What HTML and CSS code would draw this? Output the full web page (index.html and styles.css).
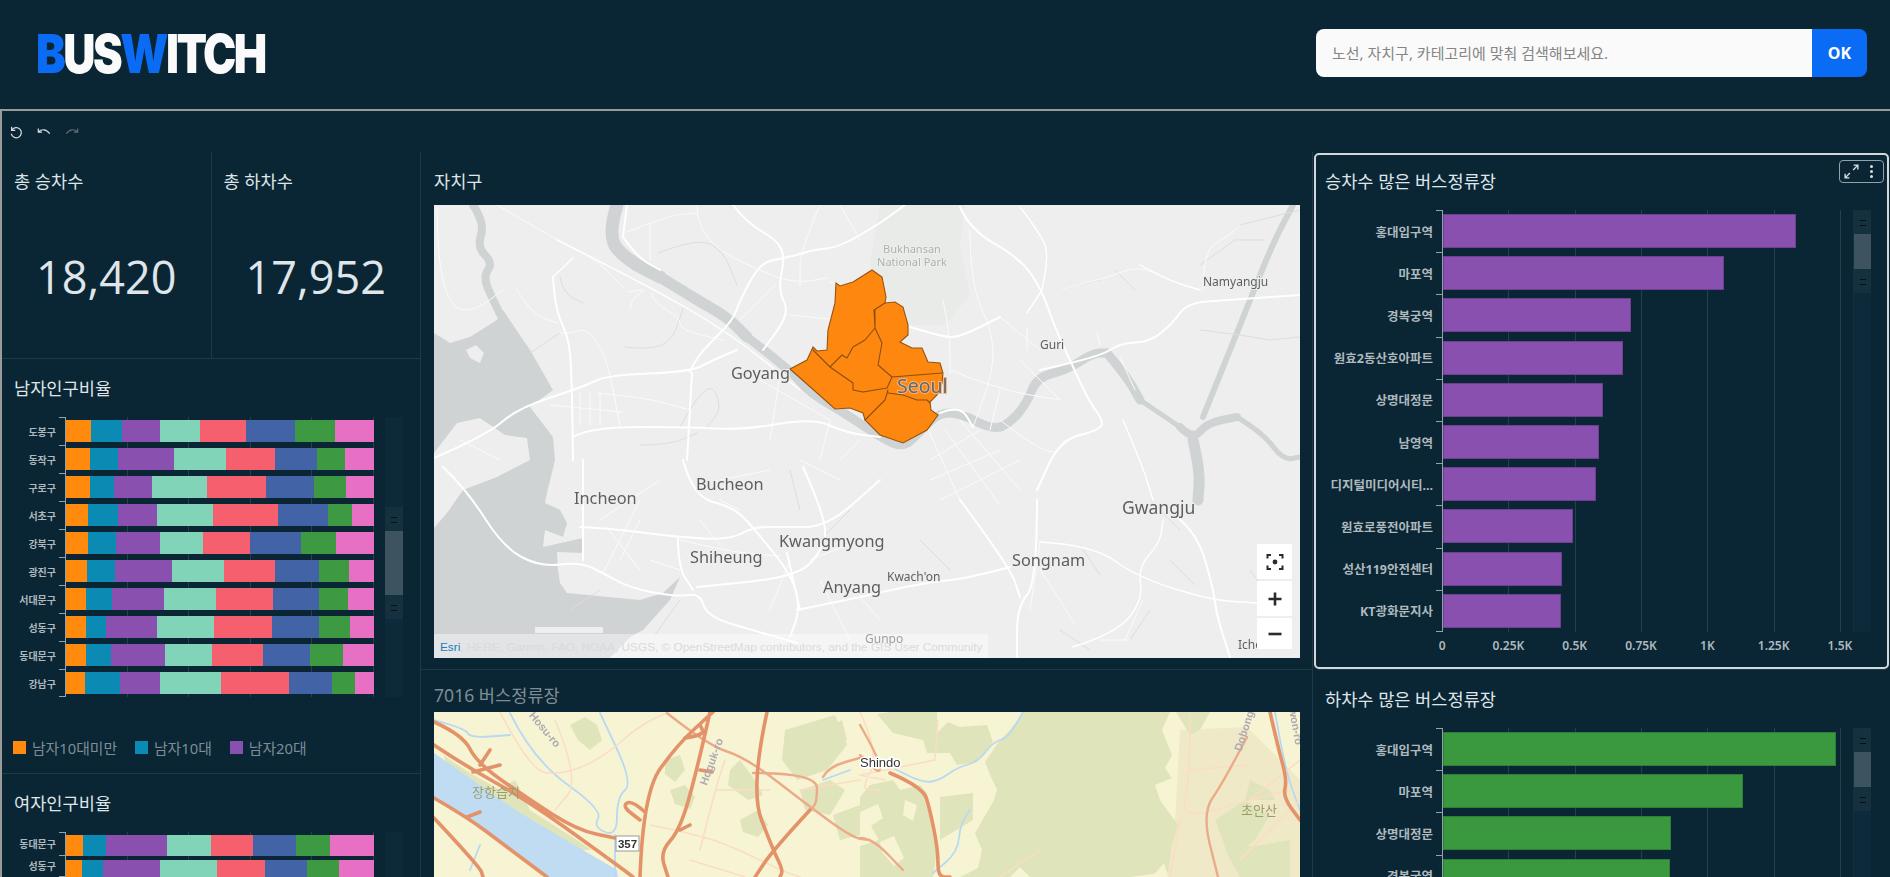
FILE: index.html
```html
<!DOCTYPE html>
<html lang="ko">
<head>
  <meta charset="UTF-8">
  <title>BUSWITCH</title>
  <link rel="stylesheet" href="styles.css">
</head>
<body>
  <header class="topbar">
    <div class="logo"><b class="blue">B</b>US<b class="blue">W</b>ITCH</div>
    <form class="search">
      <input type="text" placeholder="노선, 자치구, 카테고리에 맞춰 검색해보세요.">
      <button type="button">OK</button>
    </form>
  </header>

  <main class="sheet">
    <div class="toolbar">
      <svg viewBox="0 0 16 16"><path d="M3 2v4.2h4.2M3.2 6A5.8 5.8 0 1 1 2.6 10"/></svg>
      <svg viewBox="0 0 16 16"><path d="M1.5 4v4.2h4.2M1.7 8C5 4.400 10.500 4.200 14.500 9.800"/></svg>
      <svg class="off" viewBox="0 0 16 16"><path d="M14.500 4v4.200h-4.200M14.300 8C11 4.400 5.500 4.200 1.500 9.800"/></svg>
    </div>

    <div class="grid">
      <!-- left column -->
      <section class="col col-left">
        <div class="kpis">
          <div class="kpi">
            <h3 class="title">총 승차수</h3>
            <div class="kpi-value">18,420</div>
          </div>
          <div class="kpi">
            <h3 class="title">총 하차수</h3>
            <div class="kpi-value">17,952</div>
          </div>
        </div>

        <div class="panel panel-men">
          <h3 class="title">남자인구비율</h3>
          <div class="chart stack">
            <div class="labels">
              <span>도봉구</span><span>동작구</span><span>구로구</span><span>서초구</span><span>강북구</span>
              <span>광진구</span><span>서대문구</span><span>성동구</span><span>동대문구</span><span>강남구</span>
            </div>
            <div class="plot">
              <div class="sbar"><i style="flex:74"></i><i style="flex:95"></i><i style="flex:114"></i><i style="flex:120"></i><i style="flex:138"></i><i style="flex:145"></i><i style="flex:120"></i><i style="flex:118"></i></div>
              <div class="sbar"><i style="flex:71"></i><i style="flex:84"></i><i style="flex:170"></i><i style="flex:156"></i><i style="flex:145"></i><i style="flex:127"></i><i style="flex:85"></i><i style="flex:86"></i></div>
              <div class="sbar"><i style="flex:71"></i><i style="flex:73"></i><i style="flex:114"></i><i style="flex:166"></i><i style="flex:177"></i><i style="flex:144"></i><i style="flex:96"></i><i style="flex:83"></i></div>
              <div class="sbar"><i style="flex:67"></i><i style="flex:88"></i><i style="flex:117"></i><i style="flex:170"></i><i style="flex:194"></i><i style="flex:149"></i><i style="flex:74"></i><i style="flex:65"></i></div>
              <div class="sbar"><i style="flex:67"></i><i style="flex:84"></i><i style="flex:132"></i><i style="flex:127"></i><i style="flex:142"></i><i style="flex:152"></i><i style="flex:106"></i><i style="flex:114"></i></div>
              <div class="sbar"><i style="flex:64"></i><i style="flex:84"></i><i style="flex:170"></i><i style="flex:156"></i><i style="flex:152"></i><i style="flex:134"></i><i style="flex:89"></i><i style="flex:75"></i></div>
              <div class="sbar"><i style="flex:60"></i><i style="flex:78"></i><i style="flex:155"></i><i style="flex:156"></i><i style="flex:173"></i><i style="flex:138"></i><i style="flex:85"></i><i style="flex:79"></i></div>
              <div class="sbar"><i style="flex:60"></i><i style="flex:60"></i><i style="flex:152"></i><i style="flex:173"></i><i style="flex:174"></i><i style="flex:141"></i><i style="flex:92"></i><i style="flex:72"></i></div>
              <div class="sbar"><i style="flex:60"></i><i style="flex:74"></i><i style="flex:163"></i><i style="flex:141"></i><i style="flex:153"></i><i style="flex:141"></i><i style="flex:99"></i><i style="flex:93"></i></div>
              <div class="sbar"><i style="flex:57"></i><i style="flex:105"></i><i style="flex:121"></i><i style="flex:183"></i><i style="flex:202"></i><i style="flex:131"></i><i style="flex:67"></i><i style="flex:58"></i></div>
            </div>
            <div class="scroller"><b></b><em></em><b></b></div>
          </div>
          <ul class="legend">
            <li><i class="c1"></i>남자10대미만</li>
            <li><i class="c2"></i>남자10대</li>
            <li><i class="c3"></i>남자20대</li>
          </ul>
        </div>

        <div class="panel panel-women">
          <h3 class="title">여자인구비율</h3>
          <div class="chart stack tight">
            <div class="labels">
              <span>동대문구</span><span>성동구</span>
            </div>
            <div class="plot">
              <div class="sbar"><i style="flex:52"></i><i style="flex:67"></i><i style="flex:184"></i><i style="flex:132"></i><i style="flex:127"></i><i style="flex:127"></i><i style="flex:103"></i><i style="flex:132"></i></div>
              <div class="sbar"><i style="flex:49"></i><i style="flex:63"></i><i style="flex:171"></i><i style="flex:170"></i><i style="flex:145"></i><i style="flex:126"></i><i style="flex:96"></i><i style="flex:104"></i></div>
            </div>
            <div class="scroller"></div>
          </div>
        </div>
      </section>

      <!-- maps -->
      <section class="col col-mid">
        <div class="panel panel-map">
          <h3 class="title">자치구</h3>
          <div class="map">
            <svg class="map-svg soft" viewBox="434 205 866 453">
              <rect x="434" y="205" width="866" height="453" fill="#eeeeee"/>
              <path fill="#e9ebe8" d="M880 205h85l-5 40 10 50-25 30h-45l-30-60z"/>
              <g class="water">
                <path d="M434 333 450 343 470 337 497 320 503 310 530 350 553 390 530 407 553 437 555 460 547 493 545 503 560 510 567 523 563 537 545 530 543 547 583 538 583 553 557 552 558 570 560 583 567 593 640 600 663 593 680 577 670 600 643 630 630 637 610 658H434z"/>
              </g>
              <path fill="#eeeeee" d="M434 453 457 423 480 418 505 435 527 438 530 460 497 477 463 490 447 513 434 528z"/>
              <path fill="#eeeeee" d="M466 350l10-5 8 8-4 10-10-5zM535 627h68v6h-68z"/>
              <g class="river smooth">
                <path stroke-width="13" d="M617 205 607 237 627 260 660 277"/>
                <path stroke-width="11" d="M660 277 697 300 727 317 747 337"/>
                <path stroke-width="9" d="M747 337 790 370 810 393 843 412 880 437 903 448 920 432 938 413 960 413 993 430 1010 423 1027 403 1037 377 1067 370 1093 353 1107 353"/>
                <path stroke-width="9" d="M1107 353 1127 377 1140 400"/>
                <path stroke-width="5" d="M1140 400 1180 427"/>
                <path stroke-width="8" d="M1180 427 1193 440 1207 423 1237 417"/>
                <path stroke-width="5" d="M1237 417 1263 433 1283 460 1300 457"/>
                <path stroke-width="11" d="M1193 440 1200 470 1198 500"/>
                <path stroke-width="6" d="M1203 417 1237 333 1250 300 1273 243 1293 205"/>
                <path stroke-width="8" d="M473 205 485 223 477 247 493 263 483 277 493 300 503 320"/>
              </g>
              <g class="road-grey smooth">
                <path d="M560 277 563 293 583 303M658 253 697 238 723 250 737 285M625 347 650 350 673 340 683 308M680 427 707 377 723 407 707 427M640 445 670 445 697 433M530 353 560 333M1100 280 1080 283 1060 290M1240 225 1300 210M1200 330l40 5 30 5 30-3M1200 265l35-25 30 0M1135 290l-20 -20M1250 570l30 40M1060 630l30 20M1080 545l20 30M1170 560l25 25M1130 640l20-30"/>
                <path d="M920 540l30 30M570 610l30-20M680 600l-25 35M820 540l30-30M790 470l10 40M1150 500l30 30"/>
              </g>
              <g class="road-thin smooth">
                <path d="M437 207 437 257 450 307 473 312 503 290M515 287 530 313 557 323M497 205 557 240 597 260 623 287M650 223 650 260M627 232 670 215 697 213M697 205 697 238 763 273 797 283 827 278M627 292 650 288 633 297 630 310M652 293 653 303 680 317 680 330 723 340M560 333 573 333 587 328 607 357 620 427M580 393 580 425M597 393 643 397 690 410M550 405 622 412M590 393 590 425M600 393 600 425"/>
                <path d="M820 205 800 250 800 285M830 282 860 290 880 310M840 205 860 240M775 285 740 320M790 315 840 320M760 380 830 420M780 375 770 440M830 420 820 460M860 440 840 460M720 480 770 470M800 460 840 480M460 440 500 460"/>
                <path d="M943 300 950 333 950 373M970 230 970 283 993 333 993 373 973 427M1027 327 1027 350M1000 317 1040 350M950 370 1000 390 1060 400M1000 390 990 430M1060 400 1020 360M1120 357 1135 390M1097 332 1100 345M1060 290 1080 283 1100 280 1140 265 1167 280 1200 290M1203 290 1203 250 1230 235 1240 225M1000 420 1050 460 1065 440M927 427 960 500M945 430 1000 505M960 420 1020 490M1000 450 930 480M1020 460 940 500M980 430 930 460"/>
                <path d="M603 573 640 500M600 520 660 480M640 520 620 560M720 500 740 510M700 520 720 545M650 560 680 570M680 540 730 552 780 556M605 525 640 570M770 610 790 560M810 560 860 540M820 580 850 640M860 597 880 620M1040 542 1030 610M1100 640 1130 640M1143 600 1125 640M1040 570 1060 600 1075 625"/>
              </g>
              <g class="road-mid smooth">
                <path d="M557 240 643 283 730 333 800 390M1020 207 1043 237 1048 257 1042 290M1042 290 1027 313M1140 265 1167 280 1200 290M1123 420 1143 467 1153 500M573 258 553 277M1073 647 1117 633 1143 600 1138 567 1160 543 1163 520M1040 542 1093 545 1137 577 1210 600 1257 603"/>
              </g>
              <g class="road smooth">
                <path d="M434 458 487 435 518 408 583 387 607 375 690 372 713 360 737 350M690 372 695 360 710 343 733 320 740 300 760 263 783 258 797 255 813 250 840 247 880 223M553 277 555 310 570 340 572 393 573 460M687 460 692 373M573 437 590 427 690 427 743 430 813 418 847 433 880 437M733 205 747 223 777 240 785 257 778 290 790 313 763 350M623 237 627 205M623 237 637 257 660 270"/>
                <path d="M960 207 970 230 1020 258 1042 290 1053 323 1073 367 1090 403 1103 420 1100 430 1060 440 1037 490M910 327 943 337 960 337 1000 317M1040 370 1100 357 1120 343 1150 342 1173 323 1187 303 1227 300 1300 295M880 223 905 205M940 413 960 405 973 427"/>
                <path d="M443 467 467 490 503 547 540 567 580 562 603 573 630 588 677 597 700 593 707 617 763 633 797 643M583 460 583 560M580 527 607 528 677 537 730 540 753 527 783 527 827 527 880 480M683 460 693 497 733 507 753 527 793 577 800 610 790 637M678 537 678 567 693 590M803 467 827 520 823 550 797 577 697 587M797 610 880 593M787 553 800 610M960 500 1010 567 1020 597M1037 500 1037 583 1017 607 1017 657M1010 567 970 578 923 583 860 597M1177 517 1197 533 1213 587 1217 617 1230 657"/>
              </g>
              <path class="gu" d="M790 369 807 360 813 347 817 351 827 350 828 330 835 303 836 283 840 286 853 282 872 270 882 277 886 297 885 303 895 302 903 307 908 325 908 335 900 342 912 348 922 348 928 362 940 363 943 373 942 383 937 395 930 402 931 410 938 415 927 430 903 443 880 435 865 420 863 413 850 408 835 409z"/>
              <path class="gu-line" d="M813 350 830 367 853 383 853 390 863 392 887 388 892 377 878 365 882 343 875 328 874 310 885 303M875 328 865 340 853 347 847 358 842 355 830 367M875 310 875 323 875 328M878 365 892 377 942 373M888 390 885 400 865 420M888 393 903 395 917 400 927 400 930 403"/>
              <g class="place">
                <text class="p-lg" x="731" y="379">Goyang</text>
                <text class="p-seoul" x="897" y="393">Seoul</text>
                <text class="p-sm" x="1040" y="349">Guri</text>
                <text class="p-sm" x="1203" y="286">Namyangju</text>
                <text class="p-park" x="912" y="253" text-anchor="middle">Bukhansan</text>
                <text class="p-park" x="912" y="266" text-anchor="middle">National Park</text>
                <text class="p-lg" x="574" y="504">Incheon</text>
                <text class="p-lg" x="696" y="490">Bucheon</text>
                <text class="p-lg" x="779" y="547">Kwangmyong</text>
                <text class="p-lg" x="690" y="563">Shiheung</text>
                <text class="p-lg" x="823" y="593">Anyang</text>
                <text class="p-sm" x="887" y="581">Kwach'on</text>
                <text class="p-lg" x="1012" y="566">Songnam</text>
                <text class="p-xl" x="1122" y="514">Gwangju</text>
                <text class="p-sm" x="865" y="643">Gunpo</text>
                <text class="p-sm" x="1238" y="649">Ichon</text>
              </g>
            </svg>
            <div class="credit"><span>Esri</span>, HERE, Garmin, FAO, NOAA, USGS, © OpenStreetMap contributors, and the GIS User Community</div>
            <div class="map-tools">
              <button type="button"><svg viewBox="0 0 18 18"><path d="M1.500 5.500V2h3.500M13 2h3.500v3.500M16.500 12.500V16H13M5 16H1.500v-3.500"/><circle cx="9" cy="9" r="2.400"/></svg></button>
              <button type="button"><svg viewBox="0 0 18 18"><path d="M9 2.500v13M2.500 9h13"/></svg></button>
              <button type="button"><svg viewBox="0 0 18 18"><path d="M2.500 9h13"/></svg></button>
            </div>
          </div>
        </div>

        <div class="panel panel-map panel-map2">
          <h3 class="title dim">7016 버스정류장</h3>
          <div class="map">
            <svg class="map-svg soft" viewBox="434 712 866 165">
              <rect x="434" y="712" width="866" height="165" fill="#f7f4d3"/>
              <path class="tan" d="M1180 730 1247 727 1300 780 1300 877H1160L1175 820z"/>
              <path class="forest" d="M1023 712 1010 730 1000 740 985 762 990 775 997 790 993 802 975 833 982 850 978 868 960 877H1130L1168 872 1172 845 1178 825 1160 800 1155 785 1172 778 1165 768 1172 755 1162 730 1170 712z"/>
              <path class="forest" d="M877 714 890 712 937 712 937 733 948 722 960 727 987 725 993 742 977 762 957 765 950 753 927 753 923 740 893 733zM860 797 870 785 893 780 900 790 920 785 927 793 932 823 937 850 933 877H860zM940 797 973 793 973 820 940 840zM1176 712 1210 712 1200 730 1190 735zM1215 820 1245 800 1270 815 1255 840 1230 860zM1225 850 1260 845 1290 840 1290 877H1240zM1250 780 1270 790 1275 800 1245 800z"/>
              <path class="forest" d="M443 755 470 773 500 790 515 780 530 810 577 840 592 850 575 850 530 825 490 800 450 770zM570 725l15-8 12 8 5 15-12 10-12-10zM665 760l15-5 5 15-10 12-10-8zM670 790l15-5 10 12-5 12-15-5zM730 770l10-10 15 20 8 15-15 5-20-15zM740 820l18-10 10 15-10 12-15-5zM785 730l50-15 12 30-20 25-30 10-15-20zM800 790l30-10 15 10-15 25-25-5zM822 730l20-10 5 20-10 10zM833 815l27-10v30l-20 5z"/>
              <path class="cream" d="M860 812l18-8 5 14-12 8 8 14-19 6zM880 842l14-6 10 22-10 8-12-14zM905 800l12 5-4 16-10-6zM1010 877l10-10 10 10zM1152 877l12-14 4 14z"/>
              <path class="lake" d="M434 753 520 813 617 870 618 877H547L507 847 467 817 434 798z"/>
              <g class="stream smooth">
                <path d="M1023 712 1010 737 993 742 978 762 958 767 940 780 923 783 893 768M970 810 960 823 958 852 933 873M510 713 533 760 603 810 593 827 617 837 617 797 633 783 600 713M434 720 465 728 470 738 510 735M615 877 615 835M823 780 850 770M1275 712 1285 770 1300 810M480 845 470 870"/>
              </g>
              <g class="lane smooth">
                <path d="M500 712 530 770 560 775 600 760 640 725 667 713M555 720 580 780 555 810M700 850 715 790 725 760M715 790 770 790M650 825 700 835 740 850 780 870 800 877M860 712 880 755 860 790 880 790M860 780 800 790M690 860 745 877M1000 877 1040 850M1190 715 1190 780 1180 820 1250 800 1290 790M1180 820 1170 877M1250 800 1300 760M1240 860 1300 800M1190 770 1250 765M860 775 885 780M938 720 935 760M935 760 860 775"/>
              </g>
              <g class="hwy-sm smooth">
                <path d="M667 713 707 745 747 758 810 807 853 838 870 840M753 773 817 773 817 803 810 810M823 777 828 767 863 757M1247 737 1223 783 1202 813 1218 877M860 838 872 838 903 870M860 725 880 760 880 775 860 755"/>
              </g>
              <g class="hwy smooth">
                <path d="M434 722 463 735 477 763 527 798 577 830 615 838M434 745 467 767 527 800 620 867 633 877M640 877 643 793 677 745 713 712M710 712 697 770 680 830 660 852 668 877M767 712 750 790 773 850 783 870 780 877M810 810 773 850 755 877M434 798 467 817 507 847 547 877M434 818 480 867 483 877M890 773 923 787 930 810 938 850 938 877 950 877M1270 712 1278 747 1287 780 1283 797 1300 820"/>
                <path d="M480 765 490 750M473 772 500 765M645 812 632 800 622 806 640 820M685 738 705 735 700 725M700 770 712 772M680 830 690 825M467 817 480 812"/>
              </g>
              <rect class="shield" x="616" y="836" width="23" height="15"/>
              <text class="shield-no" x="627.500" y="848" text-anchor="middle">357</text>
              <text class="topo-label" x="472" y="797">장항습지</text>
              <text class="topo-label" x="1241" y="815">초안산</text>
              <text class="topo-road" transform="translate(542 732) rotate(50)" text-anchor="middle">Hosu-ro</text>
              <text class="topo-road" transform="translate(715 763) rotate(-70)" text-anchor="middle">Hoguk-ro</text>
              <text class="topo-road" transform="translate(1250 725) rotate(-72)" text-anchor="middle">Dobong-ro</text>
              <text class="topo-road" transform="translate(1291 720) rotate(80)" text-anchor="middle">Nowon-ro</text>
              <text class="topo-town" x="860" y="767">Shindo</text>
            </svg>
          </div>
        </div>
      </section>

      <!-- right column -->
      <section class="col col-right">
        <div class="panel panel-rank active">
          <h3 class="title">승차수 많은 버스정류장</h3>
          <div class="visual-tools">
            <svg viewBox="0 0 16 16"><path d="M9.500 6.500 14 2M10 2h4v4M6.500 9.500 2 14M6 14H2v-4"/></svg>
            <span class="dots"><i></i><i></i><i></i></span>
          </div>
          <div class="chart rank purple">
            <div class="labels">
              <span>홍대입구역</span><span>마포역</span><span>경복궁역</span><span>원효2동산호아파트</span><span>상명대정문</span>
              <span>남영역</span><span>디지털미디어시티...</span><span>원효로풍전아파트</span><span>성산119안전센터</span><span>KT광화문지사</span>
            </div>
            <div class="plot">
              <div class="bar" style="width:353px"></div>
              <div class="bar" style="width:281px"></div>
              <div class="bar" style="width:188px"></div>
              <div class="bar" style="width:180px"></div>
              <div class="bar" style="width:160px"></div>
              <div class="bar" style="width:156px"></div>
              <div class="bar" style="width:153px"></div>
              <div class="bar" style="width:130px"></div>
              <div class="bar" style="width:119px"></div>
              <div class="bar" style="width:118px"></div>
            </div>
            <div class="scroller"><b></b><em></em><b></b></div>
          </div>
          <div class="xaxis">
            <span>0</span><span>0.25K</span><span>0.5K</span><span>0.75K</span><span>1K</span><span>1.25K</span><span>1.5K</span>
          </div>
        </div>

        <div class="panel panel-rank rest">
          <h3 class="title">하차수 많은 버스정류장</h3>
          <div class="chart rank green">
            <div class="labels">
              <span>홍대입구역</span><span>마포역</span><span>상명대정문</span><span>경복궁역</span>
            </div>
            <div class="plot">
              <div class="bar" style="width:393px"></div>
              <div class="bar" style="width:300px"></div>
              <div class="bar" style="width:228px"></div>
              <div class="bar" style="width:227px"></div>
            </div>
            <div class="scroller"><b></b><em></em><b></b></div>
          </div>
        </div>
      </section>
    </div>
  </main>
  <script src="map.js"></script>
</body>
</html>
```

FILE: styles.css
```css
* {
  box-sizing: border-box;
}

body {
  margin: 0;
  height: 100vh;
  overflow: hidden;
  display: flex;
  flex-direction: column;
  background-color: #0a2534;
  color: #e2e7ea;
  font-family: "Noto Sans", "Noto Sans CJK KR", sans-serif;
}

/* header */
.topbar {
  height: 109px;
  flex: none;
  display: flex;
  align-items: center;
  justify-content: space-between;
  padding: 0 23px 4px 36px;
}

.logo {
  margin-top: 2px;
  font-family: Inter, sans-serif;
  font-weight: 900;
  font-size: 54px;
  line-height: 1;
  letter-spacing: -3px;
  color: #fafafa;
  transform: scaleX(0.825);
  transform-origin: left center;
}

.logo .blue {
  color: #0a6cf5;
  font-weight: 900;
}

.search {
  display: flex;
  width: 551px;
  height: 48px;
  border-radius: 8px;
  overflow: hidden;
}

.search input {
  flex: 1;
  border: 0;
  padding: 0 16px;
  background-color: #fafafa;
  font-family: inherit;
  font-size: 15px;
}

.search input::placeholder {
  color: #868686;
  opacity: 1;
}

.search button {
  width: 55px;
  border: 0;
  background-color: #0a6cf5;
  color: white;
  font-family: inherit;
  font-size: 16px;
  font-weight: 700;
}

/* report area */
.sheet {
  flex: 1;
  min-height: 0;
  display: flex;
  flex-direction: column;
  overflow: hidden;
  border-top: 2px solid #9a9a9a;
  border-left: 2px solid #9a9a9a;
}

.toolbar {
  height: 41px;
  flex: none;
  display: flex;
  align-items: center;
  gap: 14px;
  padding-left: 7px;
}

.toolbar svg {
  width: 14px;
  height: 14px;
  fill: none;
  stroke: #d8dee1;
  stroke-width: 1.400;
}

.toolbar svg.off {
  stroke: #5b6d78;
}

.grid {
  flex: 1;
  min-height: 0;
  overflow: hidden;
  display: grid;
  grid-template-columns: 419px 891px 578px;
}

.col {
  display: flex;
  flex-direction: column;
  min-height: 0;
  overflow: hidden;
}

.col-left {
  border-right: 1px solid #1e3a49;
}

.col-right {
  border-left: 1px solid #1e3a49;
}

.panel {
  position: relative;
  flex: none;
}

.title {
  display: flex;
  align-items: center;
  height: 56px;
  margin: 0 0 2px;
  padding-left: 12px;
  font-size: 17.600px;
  font-weight: 400;
  color: #dfe5e8;
}

.title.dim {
  color: #7f8e96;
}

/* KPI cards */
.kpis {
  height: 207px;
  flex: none;
  display: flex;
  border-bottom: 1px solid #1e3a49;
}

.kpi {
  flex: 1;
  display: flex;
  flex-direction: column;
}

.kpi + .kpi {
  border-left: 1px solid #1e3a49;
}

.kpi-value {
  flex: 1;
  display: flex;
  align-items: center;
  justify-content: center;
  padding-bottom: 16px;
  font-family: "Open Sans", sans-serif;
  font-size: 45px;
  color: #dfe5e8;
}

/* charts */
.chart {
  display: flex;
}

.labels {
  position: relative;
  flex: none;
  display: flex;
  flex-direction: column;
  font-weight: 700;
  color: #aeb9be;
}

.labels span {
  position: relative;
  display: flex;
  align-items: center;
  justify-content: flex-end;
  white-space: nowrap;
}

.labels span::before,
.labels::after {
  content: "";
  position: absolute;
  top: 0;
  right: 0;
  width: 6px;
  border-top: 1px solid #93a3ab;
}

.labels::after {
  top: auto;
  bottom: 0;
}

.plot {
  flex: none;
  display: flex;
  flex-direction: column;
  border-left: 1px solid #93a3ab;
}

.scroller {
  flex: none;
  width: 18px;
  display: flex;
  flex-direction: column;
  background-color: #0c2a39;
}

.scroller b {
  position: relative;
  height: 24px;
  background-color: #15303f;
}

.scroller b::after {
  content: "";
  position: absolute;
  left: 6px;
  top: 10px;
  width: 6px;
  height: 4px;
  border-top: 1px solid #0a0f14;
  border-bottom: 1px solid #0a0f14;
}

.scroller em {
  background-color: #3d5360;
}

/* stacked bars */
.panel-men {
  height: 415px;
  border-bottom: 1px solid #1e3a49;
}

.stack {
  height: 280px;
}

.stack .labels {
  width: 63px;
  font-size: 10px;
}

.stack .labels span {
  height: 28px;
  padding-right: 9px;
}

.stack .plot {
  width: 309px;
  background: repeating-linear-gradient(90deg, transparent 0 60.600px, #24404f 60.600px 61.600px);
}

.stack .scroller {
  margin-left: 11px;
  padding-top: 90px;
}

.stack .scroller em {
  height: 64px;
}

.sbar {
  height: 22px;
  flex: none;
  margin: 3px 0;
  display: flex;
}

.sbar i {
  display: block;
}

.sbar i:nth-child(1),
.c1 {
  background-color: #ff8a0e;
}

.sbar i:nth-child(2),
.c2 {
  background-color: #0b8bb3;
}

.sbar i:nth-child(3),
.c3 {
  background-color: #8a50b0;
}

.sbar i:nth-child(4) {
  background-color: #82d4b8;
}

.sbar i:nth-child(5) {
  background-color: #f65f6d;
}

.sbar i:nth-child(6) {
  background-color: #4263a6;
}

.sbar i:nth-child(7) {
  background-color: #3d9a42;
}

.sbar i:nth-child(8) {
  background-color: #e76fc4;
}

.tight {
  height: 45px;
  margin-top: 1px;
}

.tight .labels span {
  height: 25px;
}

.tight .sbar {
  height: 21px;
  margin: 3px 0 1px;
}

.legend {
  display: flex;
  gap: 18px;
  height: 22px;
  margin: 39px 0 0;
  padding: 0 0 0 11px;
  list-style: none;
  font-size: 14.800px;
  color: #7e8e97;
}

.legend li {
  display: flex;
  align-items: center;
  gap: 6px;
}

.legend i {
  width: 13px;
  height: 13px;
}

/* maps */
.col-mid .panel-map {
  height: 518px;
  padding: 0 12px 0 13px;
  border-bottom: 1px solid #1e3a49;
}

.col-mid .title {
  height: 53px;
  margin: 0;
  padding: 3px 0 0;
}

.col-mid .panel-map2 {
  height: auto;
  border-bottom: 0;
}

.col-mid .panel-map2 .title {
  height: 42px;
  padding-top: 6px;
}

.map {
  position: relative;
  width: 866px;
}

.map-svg {
  display: block;
  width: 866px;
  height: 453px;
}

.map-svg.soft {
  filter: blur(0.35px);
}

.panel-map2 .map-svg {
  height: 165px;
}

.water {
  fill: #cfd3d4;
}

.river path,
.road path,
.road-mid path,
.road-thin path,
.road-grey path,
.gu-line,
.stream path,
.lane path,
.hwy path,
.hwy-sm path {
  fill: none;
  stroke-linejoin: round;
  stroke-linecap: round;
}

.river path {
  stroke: #cfd3d4;
}

.road path {
  stroke: #ffffff;
  stroke-width: 2;
}

.road-mid path {
  stroke: #ffffff;
  stroke-width: 1.400;
}

.road-thin path {
  stroke: #fbfbfb;
  stroke-width: 1;
}

.road-grey path {
  stroke: #dcdddd;
  stroke-width: 1;
}

.gu {
  fill: #fd870f;
  stroke: #96540f;
  stroke-width: 1.100;
}

.gu-line {
  stroke: #8c4f10;
  stroke-width: 1.100;
}

.place text {
  font-family: "Noto Sans", sans-serif;
  fill: #5c5e60;
  paint-order: stroke;
  stroke: #eeeeee;
  stroke-width: 2px;
}

.place .p-lg {
  font-size: 16.300px;
}

.place .p-xl {
  font-size: 17.500px;
}

.place .p-sm {
  font-size: 12px;
}

.place .p-park {
  font-size: 11px;
  fill: #a9b4ad;
}

.place .p-seoul {
  font-size: 19.500px;
  fill: #5f6973;
  stroke: #f7b678;
}

.credit {
  position: absolute;
  left: 0;
  bottom: 0;
  width: 554px;
  height: 24px;
  padding: 6px 0 0 6px;
  background-color: rgba(255, 255, 255, 0.4);
  font-family: "Liberation Sans", sans-serif;
  font-size: 11.800px;
  white-space: nowrap;
  color: #d9dbdc;
}

.credit span {
  color: #1a7cc2;
}

.map-tools {
  position: absolute;
  right: 8px;
  bottom: 9px;
  display: flex;
  flex-direction: column;
  gap: 2px;
}

.map-tools button {
  display: flex;
  align-items: center;
  justify-content: center;
  width: 35px;
  height: 35px;
  padding: 0;
  border: 0;
  background-color: white;
}

.map-tools button:last-child {
  height: 31px;
}

.map-tools svg {
  width: 18px;
  height: 18px;
  fill: none;
  stroke: #2b2b2b;
  stroke-width: 2.600;
}

.map-tools button:first-child svg {
  stroke-width: 2;
}

.map-tools circle {
  fill: #2b2b2b;
  stroke: none;
}

/* topographic map */
.tan {
  fill: #f0e9c8;
}

.forest {
  fill: #e0e4bb;
}

.cream {
  fill: #f7f4d3;
}

.lake {
  fill: #bfdcf2;
}

.stream path {
  stroke: #b8d9f2;
  stroke-width: 1.800;
}

.lane path {
  stroke: #fbdcc4;
  stroke-width: 1.500;
}

.hwy-sm path {
  stroke: #ecab88;
  stroke-width: 2.400;
}

.hwy path {
  stroke: #e3926a;
  stroke-width: 3.600;
}

.shield {
  fill: white;
  stroke: #9a9a9a;
  stroke-width: 1;
}

.shield-no {
  font-family: "Liberation Sans", sans-serif;
  font-weight: 700;
  font-size: 11.500px;
  fill: #333;
}

.topo-label {
  font-size: 13px;
  fill: #9a9d6a;
}

.topo-road {
  font-family: "Liberation Sans", sans-serif;
  font-weight: 700;
  font-size: 11px;
  fill: #aeaab0;
}

.topo-town {
  font-family: "Liberation Sans", sans-serif;
  font-size: 13px;
  fill: #333;
  paint-order: stroke;
  stroke: white;
  stroke-width: 3px;
}

/* ranking charts */
.panel-rank {
  height: 518px;
}

.panel-rank.rest {
  flex: 1;
  height: auto;
  min-height: 0;
  overflow: hidden;
}

.panel-rank.active {
  outline: 2px solid #d3d8da;
  outline-offset: -3px;
  border-radius: 6px;
  border-bottom: 1px solid #1e3a49;
}

.visual-tools {
  position: absolute;
  top: 8px;
  right: 6px;
  width: 45px;
  height: 23px;
  display: flex;
  align-items: center;
  justify-content: space-between;
  padding: 0 10px 0 3px;
  border: 1px solid #93a3ab;
  border-radius: 4px;
}

.visual-tools svg {
  width: 17px;
  height: 17px;
  fill: none;
  stroke: #d8dee1;
  stroke-width: 1.300;
}

.dots {
  display: flex;
  flex-direction: column;
  gap: 2px;
}

.dots i {
  width: 3px;
  height: 3px;
  border-radius: 50%;
  background-color: #d8dee1;
}

.rank .labels {
  width: 129px;
  font-size: 12.500px;
}

.rank .labels span {
  height: 42.200px;
  padding-right: 9px;
}

.rank .plot {
  width: 400px;
  background: repeating-linear-gradient(90deg, transparent 0 65.300px, #24404f 65.300px 66.300px);
}

.rank .scroller {
  margin-left: 11px;
  border-left: 1px solid #14303f;
}

.rank .scroller em {
  height: 35px;
}

.bar {
  height: 34px;
  flex: none;
  margin: 4.100px 0;
  border: 1px solid;
}

.purple .bar {
  background-color: #8a50b0;
  border-color: #6d3f8f;
}

.green .bar {
  background-color: #3a983f;
  border-color: #2f7e36;
}

.xaxis {
  display: flex;
  margin: 5px 0 0 96px;
  font-size: 12px;
  font-weight: 600;
  color: #aeb9be;
}

.xaxis span {
  width: 66.300px;
  text-align: center;
}
```

FILE: map.js
```js
// round the corners of the road lines: each point becomes a curve control
document.querySelectorAll(".smooth path").forEach((path) => {
  const parts = path.getAttribute("d").split("M").filter(Boolean);
  const out = parts.map((part) => {
    if (/[a-zA-Z]/.test(part)) return "M" + part; // relative bits stay as they are
    const n = part.trim().split(/\s+/).map(Number);
    const pts = [];
    for (let i = 0; i < n.length; i += 2) pts.push([n[i], n[i + 1]]);
    let d = "M" + pts[0].join(" ");
    for (let i = 1; i < pts.length - 1; i++) {
      const mx = (pts[i][0] + pts[i + 1][0]) / 2;
      const my = (pts[i][1] + pts[i + 1][1]) / 2;
      d += "Q" + pts[i].join(" ") + " " + mx + " " + my;
    }
    return d + "L" + pts[pts.length - 1].join(" ");
  });
  path.setAttribute("d", out.join(""));
});
```
